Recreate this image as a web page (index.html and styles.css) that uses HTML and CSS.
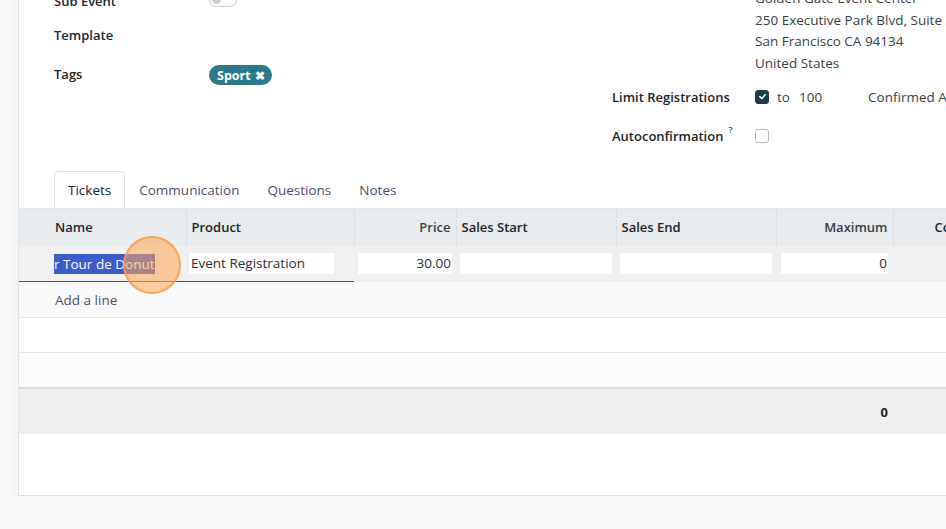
FILE: index.html
```html
<!DOCTYPE html>
<html>
<head>
<meta charset="utf-8">
<link rel="stylesheet" href="styles.css">
</head>
<body>
<div class="sheet">
  <div class="group">
    <div class="col left">
      <div class="row r1"><span class="label">Sub Event</span><span class="val"><span class="switch"><span class="knob"></span></span></span></div>
      <div class="row r2"><span class="label">Template</span><span class="val"></span></div>
      <div class="row r3"><span class="label">Tags</span><span class="val"><span class="tag">Sport <span class="x">✖</span></span></span></div>
    </div>
    <div class="col right">
      <div class="address">
        <div class="rrow"><span class="label"></span><div class="lines"><div>Golden Gate Event Center</div><div>250 Executive Park Blvd, Suite 3400</div><div>San Francisco CA 94134</div><div>United States</div></div></div>
      </div>
      <div class="rrow limit"><span class="label">Limit Registrations</span><span class="val"><span class="cb checked"><svg width="9" height="9" viewBox="0 0 10 10"><path d="M2 5.2 L4.2 7.2 L8 3" fill="none" stroke="#fff" stroke-width="1.7" stroke-linecap="round" stroke-linejoin="round"/></svg></span><span class="to">to</span><span class="num">100</span><span class="confirmed">Confirmed Attendees</span></span></div>
      <div class="rrow auto"><span class="label">Autoconfirmation<sup>?</sup></span><span class="val"><span class="cb"></span></span></div>
    </div>
  </div>

  <ul class="tabs">
    <li class="tab active">Tickets</li>
    <li class="tab">Communication</li>
    <li class="tab">Questions</li>
    <li class="tab">Notes</li>
  </ul>

  <table class="list">
    <colgroup>
      <col class="c1"><col class="c2"><col class="c3"><col class="c4"><col class="c5"><col class="c6"><col class="c7">
    </colgroup>
    <thead>
      <tr>
        <th class="first">Name</th>
        <th>Product</th>
        <th class="num">Price</th>
        <th>Sales Start</th>
        <th>Sales End</th>
        <th class="num">Maximum</th>
        <th class="last">Confirmed</th>
      </tr>
    </thead>
    <tbody>
      <tr class="editing">
        <td class="first ul"><div class="name-wrap"><span class="sel">r Tour de Donut</span><span class="pointer"></span></div></td>
        <td class="ul prod"><div class="inp">Event Registration</div></td>
        <td class="pad"><div class="inp right">30.00</div></td>
        <td class="pad"><div class="inp"></div></td>
        <td class="pad"><div class="inp"></div></td>
        <td class="padm"><div class="inp right">0</div></td>
        <td></td>
      </tr>
      <tr class="add">
        <td class="first" colspan="7">Add a line</td>
      </tr>
      <tr class="empty white"><td colspan="7"></td></tr>
      <tr class="empty grey"><td colspan="7"></td></tr>
    </tbody>
    <tfoot>
      <tr>
        <td></td><td></td><td></td><td></td><td></td>
        <td class="total">0</td>
        <td></td>
      </tr>
    </tfoot>
  </table>
  <div class="sheet-bottom"></div>
</div>
</body>
</html>
```

FILE: styles.css
```css
html, body {
  margin: 0;
  padding: 0;
  background: #f8f9fb;
  font-family: "Open Sans", "Noto Sans", sans-serif;
  font-size: 13.5px;
  color: #212529;
  overflow: hidden;
}

.sheet {
  margin-top: -16px;
  margin-left: 18px;
  width: 1000px;
  background: #fff;
  border-left: 1px solid #dfe1e4;
  border-bottom: 1px solid #dfe1e4;
  box-shadow: 0 6px 12px rgba(0, 0, 0, 0.04);
}

.group {
  display: flex;
  padding-left: 35px;
}

.col.left {
  width: 558px;
  display: flex;
  flex-direction: column;
}

.row {
  display: flex;
  align-items: center;
}

.row.r1 { height: 33px; }
.row.r2 { height: 35px; }
.row.r3 { height: 43px; }

.row .label {
  width: 155px;
  font-weight: 600;
  font-size: 13px;
}

.switch {
  display: inline-block;
  width: 26px;
  height: 13px;
  border: 1px solid #c4c8cc;
  border-radius: 8px;
  background: #fff;
  position: relative;
  vertical-align: middle;
  margin-top: -4px;
}

.switch .knob {
  position: absolute;
  left: 2px;
  top: 2px;
  width: 9px;
  height: 9px;
  border-radius: 50%;
  background: #c9cdd1;
}

.tag {
  display: inline-flex;
  align-items: center;
  height: 20px;
  padding: 0 7px 0 8px;
  border-radius: 10px;
  background: #2b7a8b;
  color: #fff;
  font-weight: 700;
  font-size: 12.5px;
  margin-top: 3px;
}

.tag .x {
  font-size: 12px;
  margin-left: 4px;
}

.col.right {
  display: flex;
  flex-direction: column;
  padding-top: 4px;
}

.rrow {
  display: flex;
  align-items: center;
}

.rrow .label {
  width: 143px;
  font-weight: 600;
  font-size: 13px;
  flex: none;
}

.lines {
  line-height: 21.5px;
  color: #3a3f44;
  white-space: nowrap;
}

.rrow.limit {
  height: 37px;
  margin-top: 4px;
}

.rrow.auto {
  height: 41px;
}

.rrow .val {
  display: flex;
  align-items: center;
  white-space: nowrap;
}

.cb {
  width: 12px;
  height: 12px;
  border: 1px solid #b3b9bf;
  border-radius: 3px;
  background: #fff;
  display: inline-flex;
  align-items: center;
  justify-content: center;
}

.cb.checked {
  background: #1e3c48;
  border-color: #1e3c48;
}

.to {
  margin-left: 8px;
  color: #3a3f44;
}

.num {
  margin-left: 9px;
  color: #3a3f44;
}

.confirmed {
  margin-left: 46px;
  color: #3a3f44;
}

sup {
  font-size: 9px;
  font-weight: 600;
  margin-left: 5px;
  color: #555;
  position: relative;
  top: -3px;
}

.tabs {
  list-style: none;
  margin: 15px 0 0 0;
  padding: 0 0 0 35px;
  display: flex;
  height: 37px;
}

.tab {
  padding: 0 13px;
  line-height: 36px;
  color: #4b5069;
  border: 1px solid transparent;
  border-bottom: none;
}

.tab.active {
  color: #212529;
  border-color: #dee2e6;
  border-radius: 4px 4px 0 0;
  background: #fff;
}

.list {
  border-collapse: collapse;
  table-layout: fixed;
  width: 980px;
}

col.c1 { width: 167px; }
col.c2 { width: 168px; }
col.c3 { width: 102px; }
col.c4 { width: 160px; }
col.c5 { width: 160px; }
col.c6 { width: 117px; }
col.c7 { width: 106px; }

thead th {
  height: 35px;
  padding: 0 5px 2px 5px;
  background: #e8ebee;
  font-weight: 600;
  font-size: 13px;
  text-align: left;
  border-left: 1px solid #dcdfe3;
  border-top: 1px solid #e2e5e8;
  white-space: nowrap;
  overflow: hidden;
}

thead th.first {
  padding-left: 36px;
  border-left: none;
}

thead th.num {
  text-align: right;
}

thead th.last {
  padding-left: 41px;
}

tr.editing td {
  height: 35px;
  background: #f0f0f0;
  padding: 0;
  vertical-align: middle;
}

tr.editing td.ul {
  border-bottom: 1px solid #50535c;
}

.name-wrap {
  position: relative;
  padding-left: 35px;
  height: 20px;
  display: flex;
  align-items: center;
}

.sel {
  background: #3d5ccb;
  color: #fff;
  height: 20px;
  line-height: 20px;
  white-space: nowrap;
}

.pointer {
  position: absolute;
  left: 104px;
  top: -18px;
  width: 54px;
  height: 54px;
  border-radius: 50%;
  background: rgba(255, 166, 86, 0.55);
  border: 2px solid rgba(247, 160, 80, 0.85);
}

.inp {
  background: #fff;
  height: 21px;
  line-height: 21px;
  padding: 0 2px;
  white-space: nowrap;
  color: #2b2f33;
}

.inp.right {
  text-align: right;
  padding-right: 1px;
}

td.prod {
  padding: 0 20px 0 3px !important;
}

td.pad {
  padding: 0 4px !important;
}

td.padm {
  padding: 0 5px 0 5px !important;
}

tr.add td {
  height: 35px;
  background: #fafafa;
  color: #4b5069;
  padding: 0 0 0 36px;
}

tr.empty td {
  height: 34px;
  border-top: 1px solid #e6e6e6;
  padding: 0;
}

tr.empty.white td { background: #fff; }
tr.empty.grey td { background: #fbfbfb; }

tfoot td {
  height: 45px;
  background: #eeeeee;
  border-top: 2px solid #dcdcdc;
  padding: 0 5px;
}

tfoot td.total {
  text-align: right;
  font-weight: 700;
  font-size: 13px;
}

.sheet-bottom {
  height: 61px;
}
```
